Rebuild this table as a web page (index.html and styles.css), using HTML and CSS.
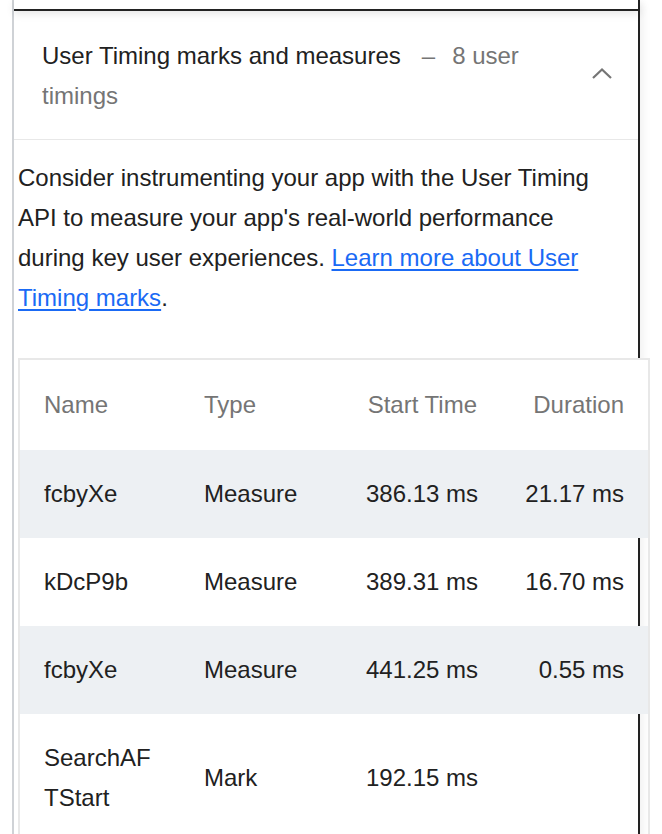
FILE: index.html
```html
<!DOCTYPE html>
<html lang="en">
<head>
<meta charset="utf-8">
<title>User Timing marks and measures</title>
<link rel="stylesheet" href="styles.css">
</head>
<body>
<div class="frame">
  <div class="inner">
    <div class="prev"></div>
    <section class="audit">
      <div class="audit-header">
        <div class="audit-title"><span class="title-text">User Timing marks and measures</span><span class="display-text">8 user timings</span></div>
        <svg class="chevron" width="24" height="24" viewBox="0 0 24 24" aria-hidden="true"><path d="M3 16 L12 7.5 L21 16" fill="none" stroke="#757575" stroke-width="2.2"/></svg>
      </div>
      <p class="desc">Consider instrumenting your app with the User Timing API to measure your app's real-world performance during key user experiences. <a href="#" class="link">Learn more about User Timing marks</a>.</p>
      <table class="timings">
        <colgroup>
          <col class="c-name"><col class="c-type"><col class="c-start"><col class="c-dur">
        </colgroup>
        <thead>
          <tr><th class="name">Name</th><th class="type">Type</th><th class="num">Start Time</th><th class="num last">Duration</th></tr>
        </thead>
        <tbody>
          <tr class="odd"><td class="name">fcbyXe</td><td class="type">Measure</td><td class="num">386.13 ms</td><td class="num last">21.17 ms</td></tr>
          <tr><td class="name">kDcP9b</td><td class="type">Measure</td><td class="num">389.31 ms</td><td class="num last">16.70 ms</td></tr>
          <tr class="odd"><td class="name">fcbyXe</td><td class="type">Measure</td><td class="num">441.25 ms</td><td class="num last">0.55 ms</td></tr>
          <tr><td class="name">SearchAFTStart</td><td class="type">Mark</td><td class="num">192.15 ms</td><td class="num last"></td></tr>
        </tbody>
      </table>
    </section>
  </div>
</div>
</body>
</html>
```

FILE: styles.css
```css
html, body {
  margin: 0;
  padding: 0;
  background: #ffffff;
}

body {
  font-family: "Liberation Sans", Arial, Helvetica, sans-serif;
  font-size: 24px;
  line-height: 40px;
  color: #212121;
  overflow: hidden;
}

.frame {
  margin-left: 12px;
  border-left: 2px solid #cfd2d6;
  width: 626px;
}

.inner {
  box-shadow: 6px 0 10px -4px rgba(0, 0, 0, 0.07);
}

.prev {
  height: 9px;
  border-bottom: 2px solid #222222;
  border-right: 2px solid #222222;
  box-shadow: 0 3px 9px rgba(0, 0, 0, 0.1);
}

.audit {
  border-right: 2px solid #222222;
  padding-bottom: 20px;
}

.audit-header {
  display: flex;
  align-items: center;
  padding: 25px 24px 23px 28px;
  border-bottom: 1px solid #e8e8e8;
}

.audit-title {
  flex: 1;
  margin-right: 26px;
}

.title-text {
  color: #212121;
}

.display-text {
  color: #757575;
}

.display-text::before {
  content: "–";
  margin-left: 21px;
  margin-right: 17px;
}

.chevron {
  flex: none;
  margin-bottom: 4px;
}

.desc {
  margin: 18px 0 0 0;
  padding: 0 20px 0 4px;
}

.link {
  color: #1a6af5;
  text-decoration: underline;
  text-underline-offset: 3px;
}

.timings {
  margin: 40px 0 0 4px;
  width: 632px;
  table-layout: fixed;
  border-collapse: separate;
  border-spacing: 0;
  border: 2px solid #e8e8e8;
}

.c-name { width: 184px; }
.c-type { width: 162px; }
.c-start { width: 111px; }
.c-dur { width: 171px; }

.timings th {
  font-weight: normal;
  color: #757575;
  background: #ffffff;
  padding-top: 25px;
  padding-bottom: 25px;
  text-align: left;
}

.timings td {
  padding-top: 24px;
  padding-bottom: 24px;
  vertical-align: middle;
}

.timings tr.odd td {
  background: #edf0f3;
}

.timings .name {
  padding-left: 24px;
  padding-right: 45px;
  word-break: break-all;
  text-align: left;
}

.timings .type {
  padding-left: 0;
  padding-right: 0;
  text-align: left;
}

.timings .num {
  padding-left: 0;
  padding-right: 0;
  text-align: right;
  white-space: nowrap;
}

.timings .num.last {
  padding-right: 24px;
}
```
